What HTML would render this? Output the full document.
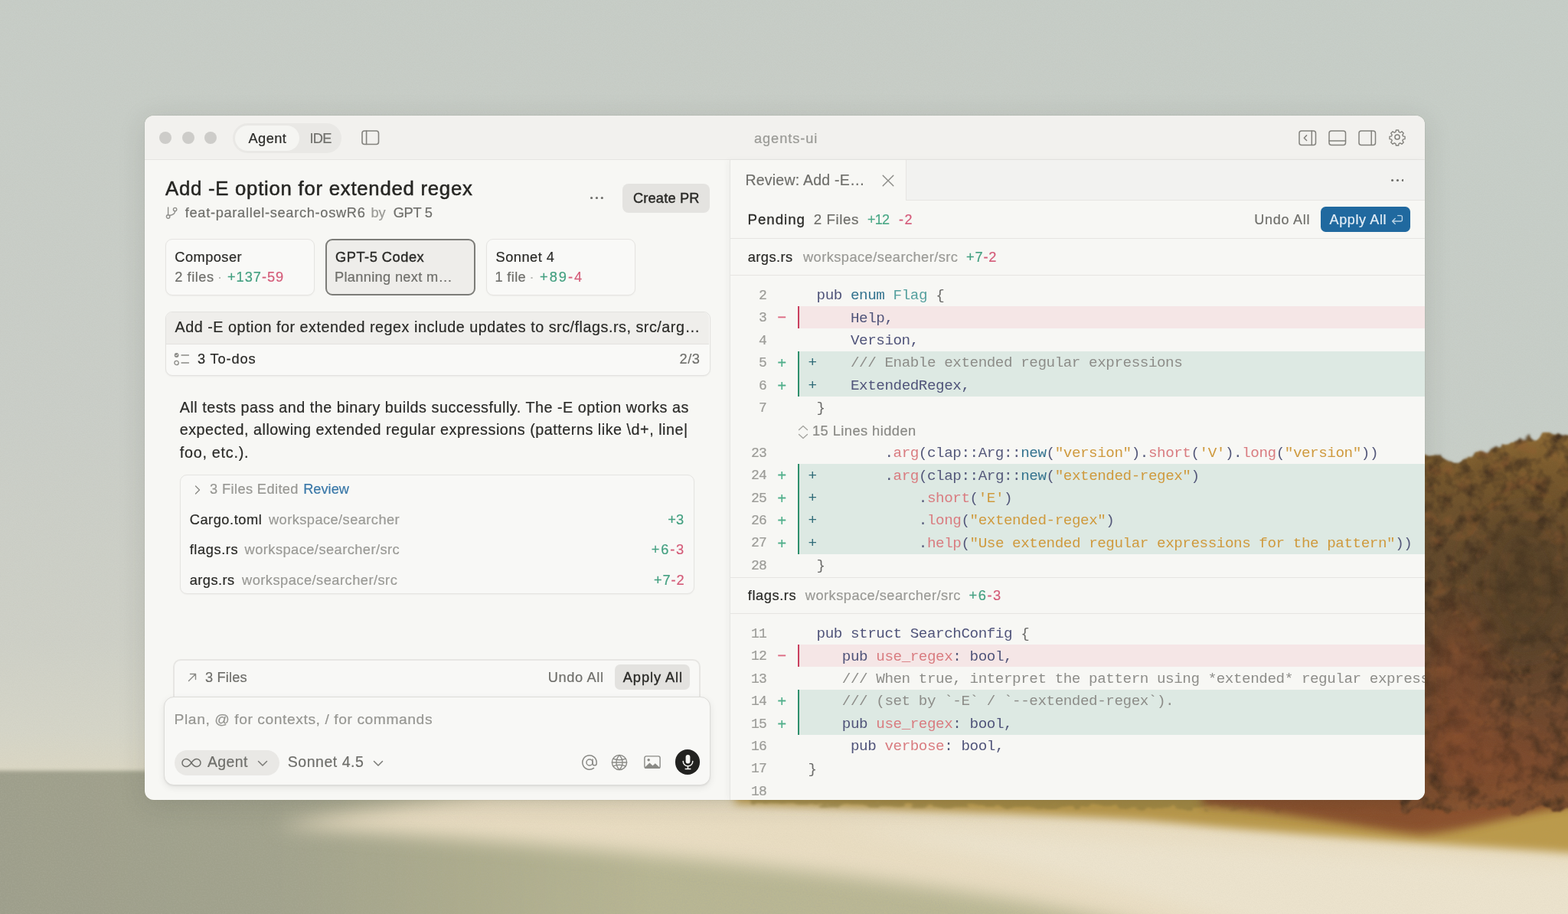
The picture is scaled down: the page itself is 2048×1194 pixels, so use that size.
<!DOCTYPE html>
<html lang="en">
<head>
<meta charset="utf-8">
<title>agents-ui</title>
<style>
*{box-sizing:border-box}
html,body{margin:0;padding:0;width:2048px;height:1194px;overflow:hidden;background:#cdd0c8}
body{position:relative;font-family:"Liberation Sans",sans-serif;-webkit-font-smoothing:antialiased}
.bg{position:absolute;left:0;top:0}
.shadow{position:absolute;left:189px;top:151px;width:1672px;height:893.5px;border-radius:12px;
  box-shadow:0 0 0 1px rgba(60,60,50,.06),0 6px 36px rgba(40,40,30,.13)}
.win{position:absolute;left:189px;top:151px;width:1672px;height:893.5px;border-radius:12px;overflow:hidden;
  background:#f7f7f4;will-change:transform}
.win .in{left:-189px;top:-151px;width:2048px;height:1194px}
.win div,.win .t,.win svg,.win pre{position:absolute;margin:0}
.win h1,.win p{font-weight:400}
.t{white-space:pre;line-height:1;-webkit-text-stroke:0.2px}
.code{white-space:pre;line-height:1;font-family:"Liberation Mono",monospace;font-size:19.25px;letter-spacing:-0.44px;color:#50547a}
.code i,.t i{font-style:normal}
.k{color:#50547a}.b{color:#34738f}.ty{color:#55a09e}.f{color:#d97c80}.s{color:#cf9a3e}.c{color:#8d8d89}.p{color:#54587a}.g{color:#6a6a68}.ip{color:#2f6b78}
</style>
</head>
<body>
<svg class="bg" width="2048" height="1194" viewBox="0 0 2048 1194" aria-hidden="true">
<defs>
  <linearGradient id="sky" x1="0" y1="0" x2="0" y2="1">
    <stop offset="0" stop-color="#c7cdc7"/>
    <stop offset="0.45" stop-color="#cacec8"/>
    <stop offset="0.7" stop-color="#ced0c7"/>
    <stop offset="0.8" stop-color="#d5d5c8"/>
    <stop offset="0.845" stop-color="#dbd7c4"/>
  </linearGradient>
  <linearGradient id="cool" x1="0" y1="0" x2="1" y2="0">
    <stop offset="0" stop-color="#c6cec8" stop-opacity="0"/>
    <stop offset="0.55" stop-color="#c6cec8" stop-opacity="0.1"/>
    <stop offset="1" stop-color="#c6cec8" stop-opacity="0.75"/>
  </linearGradient>
  <linearGradient id="water" x1="0" y1="0" x2="1" y2="0">
    <stop offset="0" stop-color="#9d9e8b"/>
    <stop offset="0.18" stop-color="#a1a28c"/>
    <stop offset="0.3" stop-color="#adac8c"/>
    <stop offset="0.42" stop-color="#b9b793"/>
    <stop offset="0.7" stop-color="#bdb994"/>
    <stop offset="1" stop-color="#c4bd98"/>
  </linearGradient>
  <linearGradient id="trees" x1="0" y1="0" x2="0" y2="1">
    <stop offset="0" stop-color="#8c6832"/>
    <stop offset="0.1" stop-color="#76572b"/>
    <stop offset="0.3" stop-color="#644a2b"/>
    <stop offset="0.55" stop-color="#5c432a"/>
    <stop offset="0.8" stop-color="#71472c"/>
    <stop offset="1" stop-color="#7e4f2e"/>
  </linearGradient>
  <filter id="b3" x="-5%" y="-5%" width="110%" height="110%"><feGaussianBlur stdDeviation="2.5"/></filter>
  <filter id="b6" x="-10%" y="-30%" width="120%" height="160%"><feGaussianBlur stdDeviation="6"/></filter>
  <filter id="b12" x="-10%" y="-40%" width="120%" height="180%"><feGaussianBlur stdDeviation="12"/></filter>
  <filter id="b24" x="-30%" y="-30%" width="160%" height="160%"><feGaussianBlur stdDeviation="22"/></filter>
  <filter id="grain" x="0" y="0" width="100%" height="100%">
    <feTurbulence type="fractalNoise" baseFrequency="0.8" numOctaves="2" seed="7"/>
    <feColorMatrix type="matrix" values="0 0 0 0 0.35  0 0 0 0 0.33  0 0 0 0 0.25  1.3 0 0 0 -0.45"/>
  </filter>
  <filter id="tuft" x="-2%" y="-60%" width="104%" height="220%">
    <feTurbulence type="fractalNoise" baseFrequency="0.05 0.12" numOctaves="2" seed="5" result="t"/>
    <feDisplacementMap in="SourceGraphic" in2="t" scale="16" xChannelSelector="R" yChannelSelector="G"/>
    <feGaussianBlur stdDeviation="1.5"/>
  </filter>
  <filter id="grain2" x="0" y="0" width="100%" height="100%">
    <feTurbulence type="fractalNoise" baseFrequency="0.55" numOctaves="2" seed="23"/>
    <feColorMatrix type="matrix" values="0 0 0 0 0.42  0 0 0 0 0.42  0 0 0 0 0.33  0 1.6 0 0 -0.6"/>
  </filter>
  <filter id="rough" x="-5%" y="-10%" width="110%" height="120%" color-interpolation-filters="sRGB">
    <feTurbulence type="fractalNoise" baseFrequency="0.035" numOctaves="3" seed="3" result="t"/>
    <feDisplacementMap in="SourceGraphic" in2="t" scale="26" xChannelSelector="R" yChannelSelector="G" result="shape0"/>
    <feGaussianBlur in="shape0" stdDeviation="1.6" result="shape"/>
    <feTurbulence type="fractalNoise" baseFrequency="0.045" numOctaves="3" seed="11" result="n"/>
    <feColorMatrix in="n" type="matrix" values="0 0 0 0 0.24  0 0 0 0 0.17  0 0 0 0 0.11  0 2.1 0 0 -0.88" result="dark"/>
    <feColorMatrix in="n" type="matrix" values="0 0 0 0 0.58  0 0 0 0 0.36  0 0 0 0 0.19  1.5 0 0 0 -0.8" result="warm"/>
    <feMerge result="m"><feMergeNode in="shape"/><feMergeNode in="dark"/><feMergeNode in="warm"/></feMerge>
    <feComposite in="m" in2="shape" operator="in"/>
  </filter>
</defs>
<rect width="2048" height="1194" fill="url(#sky)"/>
<rect width="2048" height="1000" fill="url(#cool)"/>
<!-- water / foreground -->
<rect x="-20" y="1007" width="2100" height="220" fill="url(#water)" filter="url(#b3)"/>
<rect x="0" y="1008" width="2048" height="186" filter="url(#grain2)" opacity="0.5"/>
<!-- sand spit -->
<path d="M360 1078 C 470 1058, 560 1046, 640 1036 L 2080 1036 L 2080 1230 L 1560 1230 C 1380 1172, 1060 1134, 700 1103 C 560 1092, 450 1084, 360 1078 Z" fill="#e9ddc2" filter="url(#b12)"/>
<path d="M1100 1080 C 1400 1090, 1800 1120, 2080 1135 L 2080 1230 L 1700 1230 C 1500 1170, 1300 1120, 1100 1080 Z" fill="#ece3cd" filter="url(#b12)"/>
<!-- dune grass -->
<path d="M960 1030 L 2080 1030 L 2080 1116 C 1900 1104, 1700 1092, 1500 1072 C 1300 1060, 1100 1056, 960 1050 Z" fill="#bb9a4c" filter="url(#b6)"/>
<path d="M980 1040 L 1861 1040 L 1861 1056 C 1600 1058, 1300 1054, 980 1050 Z" fill="#8d7a3e" opacity="0.55" filter="url(#tuft)"/>
<!-- red bushes at the foot of the trees -->
<path d="M1570 1030 L 2080 1030 L 2080 1050 C 1990 1058, 1920 1086, 1855 1090 C 1790 1084, 1690 1062, 1570 1052 Z" fill="#85482a" opacity="0.9" filter="url(#b6)"/>
<!-- tree mass on the right -->
<path d="M1830 590 L 1861 595 C 1880 596, 1895 601, 1908 600 C 1920 598, 1926 594, 1934 591 C 1950 586, 1962 580, 1978 577 C 1996 571, 2010 568, 2025 567 C 2035 567, 2042 569, 2060 571 L 2060 1058 L 1830 1058 Z" fill="url(#trees)" filter="url(#rough)"/>
<ellipse cx="1990" cy="760" rx="60" ry="90" fill="#4e3a24" opacity="0.55" filter="url(#b24)"/>
<ellipse cx="1905" cy="900" rx="45" ry="110" fill="#87482b" opacity="0.45" filter="url(#b24)"/>
<ellipse cx="1950" cy="1000" rx="80" ry="40" fill="#87482b" opacity="0.45" filter="url(#b24)"/>
<rect width="2048" height="1194" filter="url(#grain)" opacity="0.10"/>
</svg>
<div class="shadow"></div>
<main class="win"><div class="in">
<!-- title bar -->
<div style="left:189px;top:151px;width:1672px;height:58px;background:#f2f1ee;border-bottom:1px solid #e6e5e2"></div>
<div style="left:208.25px;top:172px;width:16px;height:16px;border-radius:50%;background:#cdccc9"></div>
<div style="left:237.5px;top:172px;width:16px;height:16px;border-radius:50%;background:#cdccc9"></div>
<div style="left:267px;top:172px;width:16px;height:16px;border-radius:50%;background:#cdccc9"></div>
<div style="left:304px;top:161px;width:142px;height:38.5px;border-radius:20px;background:#e9e8e5"></div>
<div style="left:307px;top:164px;width:84px;height:32.5px;border-radius:17px;background:#f5f5f2"></div>
<span class="t" style="left:324.50px;top:172.00px;font-size:18.25px;color:#2a2a27;letter-spacing:0.41px;">Agent</span>
<span class="t" style="left:404.50px;top:172.00px;font-size:18.25px;color:#6f6f6b;letter-spacing:-0.75px;">IDE</span>
<svg style="left:471.5px;top:170px" width="24" height="20" viewBox="0 0 24 20" fill="none" stroke="#83827d" stroke-width="1.6" stroke-linecap="round" stroke-linejoin="round" ><rect x="1" y="1" width="21.5" height="17.5" rx="3"/><path d="M6.6 1v17.5"/></svg>
<span class="t" style="left:985.00px;top:172.00px;font-size:18.25px;color:#9a9a96;letter-spacing:0.9px;">agents-ui</span>
<svg style="left:1695.5px;top:169.5px" width="24" height="21" viewBox="0 0 24 21" fill="none" stroke="#83827d" stroke-width="1.5" stroke-linecap="round" stroke-linejoin="round" ><rect x="1" y="1" width="21.5" height="18.5" rx="3"/><path d="M17.3 1v18.5"/><path d="M10.6 6.9 7.3 10.2l3.3 3.3"/></svg>
<svg style="left:1734.5px;top:169.5px" width="24" height="21" viewBox="0 0 24 21" fill="none" stroke="#83827d" stroke-width="1.5" stroke-linecap="round" stroke-linejoin="round" ><rect x="1" y="1" width="21.5" height="18.5" rx="3"/><path d="M1 14h21.5"/></svg>
<svg style="left:1774px;top:169.5px" width="24" height="21" viewBox="0 0 24 21" fill="none" stroke="#83827d" stroke-width="1.5" stroke-linecap="round" stroke-linejoin="round" ><rect x="1" y="1" width="21.5" height="18.5" rx="3"/><path d="M17.2 1v18.5"/></svg>
<svg style="left:1813.4px;top:167px" width="24" height="24" viewBox="0 0 24 24" fill="none" stroke="#83827d" stroke-width="1.5" stroke-linecap="round" stroke-linejoin="round" ><circle cx="12" cy="12" r="3.1"/><path d="M10.3 2.3h3.4l.6 2.7 1.7.8 2.4-1.5 2.4 2.4-1.5 2.4.8 1.7 2.7.6v3.4l-2.7.6-.8 1.7 1.5 2.4-2.4 2.4-2.4-1.5-1.7.8-.6 2.7h-3.4l-.6-2.7-1.7-.8-2.4 1.5-2.4-2.4 1.5-2.4-.8-1.7-2.7-.6v-3.4l2.7-.6.8-1.7-1.5-2.4 2.4-2.4 2.4 1.5 1.7-.8z" transform="translate(12 12) scale(0.93) translate(-12 -12)"/></svg>
<!-- left panel: agent conversation -->
<h1 class="t" style="left:216.00px;top:234.00px;font-size:25.75px;color:#262623;letter-spacing:0.74px;-webkit-text-stroke:0.5px #262623;">Add -E option for extended regex</h1>
<svg style="left:215.5px;top:269.5px" width="17" height="17" viewBox="0 0 17 17" fill="none" stroke="#8f8f8b" stroke-width="1.4" stroke-linecap="round" stroke-linejoin="round" ><circle cx="3.6" cy="13" r="2.2"/><circle cx="12.6" cy="3.6" r="2.2"/><path d="M3.6 1v9.6"/><path d="M12.6 5.9c0 3.6-3.2 4.8-6.9 5.6"/></svg>
<span class="t" style="left:241.75px;top:269.00px;font-size:18.25px;color:#6f6f6b;letter-spacing:0.68px;">feat-parallel-search-oswR6</span>
<span class="t" style="left:484.50px;top:269.00px;font-size:18.25px;color:#9a9a96;letter-spacing:-0.15px;">by</span>
<span class="t" style="left:513.75px;top:269.00px;font-size:18.25px;color:#6f6f6b;letter-spacing:-0.33px;">GPT 5</span>
<svg style="left:771.25px;top:257.2px" width="16.9" height="3.1" viewBox="0 0 16.9 3.1" fill="#6f6f6b"><circle cx="1.55" cy="1.55" r="1.55"/><circle cx="8.45" cy="1.55" r="1.55"/><circle cx="15.35" cy="1.55" r="1.55"/></svg>
<div style="left:812.75px;top:239.5px;width:114.25px;height:38.5px;border-radius:8px;background:#e4e3e0"></div>
<span class="t" style="left:827.00px;top:250.00px;font-size:18.25px;color:#2a2a27;letter-spacing:0.15px;-webkit-text-stroke:0.4px #2a2a27;">Create PR</span>
<div style="left:215.5px;top:312px;width:195px;height:73.5px;border-radius:9px;border:1.5px solid #e5e4e1;background:#f9f9f7;box-shadow:0 1px 2px rgba(0,0,0,.04)"></div>
<div style="left:424.5px;top:312px;width:196px;height:73.5px;border-radius:9px;border:2px solid #7c7c78;background:#eeedea"></div>
<div style="left:634.5px;top:312px;width:195.5px;height:73.5px;border-radius:9px;border:1.5px solid #e5e4e1;background:#f9f9f7;box-shadow:0 1px 2px rgba(0,0,0,.04)"></div>
<span class="t" style="left:228.25px;top:327.00px;font-size:18.25px;color:#2a2a27;letter-spacing:0.45px;">Composer</span>
<span class="t" style="left:228.25px;top:353.00px;font-size:18.25px;color:#6f6f6b;letter-spacing:0.53px;">2 files</span>
<span class="t" style="left:284.00px;top:353.00px;font-size:18.25px;color:#b5b5b1;">·</span>
<span class="t" style="left:297.00px;top:353.00px;font-size:18.25px;color:#44a081;letter-spacing:0.94px;"><i style="color:#44a081">+137</i><i style="color:#d45c79">-59</i></span>
<span class="t" style="left:438.00px;top:327.00px;font-size:18.25px;color:#2a2a27;letter-spacing:0.51px;-webkit-text-stroke:0.4px #2a2a27;">GPT-5 Codex</span>
<span class="t" style="left:437.00px;top:353.00px;font-size:18.25px;color:#6f6f6b;letter-spacing:0.31px;">Planning next m…</span>
<span class="t" style="left:647.50px;top:327.00px;font-size:18.25px;color:#2a2a27;letter-spacing:0.48px;">Sonnet 4</span>
<span class="t" style="left:646.50px;top:353.00px;font-size:18.25px;color:#6f6f6b;letter-spacing:0.32px;">1 file</span>
<span class="t" style="left:691.50px;top:353.00px;font-size:18.25px;color:#b5b5b1;">·</span>
<span class="t" style="left:705.00px;top:353.00px;font-size:18.25px;color:#44a081;letter-spacing:1.99px;"><i style="color:#44a081">+89</i><i style="color:#d45c79">-4</i></span>
<div style="left:215.5px;top:406.5px;width:712px;height:84.5px;border-radius:9px;border:1.5px solid #e3e2df;background:#f9f9f7;box-shadow:0 1px 2px rgba(0,0,0,.05)"></div>
<div style="left:217px;top:408px;width:709px;height:41.5px;border-radius:7.5px 7.5px 0 0;background:#efeeeb;border-bottom:1px solid #e3e2df"></div>
<span class="t" style="left:228.50px;top:418.00px;font-size:19.75px;color:#2a2a27;letter-spacing:0.52px;">Add -E option for extended regex include updates to src/flags.rs, src/arg…</span>
<svg style="left:227px;top:459.5px" width="21" height="18" viewBox="0 0 21 18" fill="none" stroke="#8a8a86" stroke-width="1.3" stroke-linecap="round" stroke-linejoin="round" ><circle cx="3.6" cy="4" r="2.9" fill="#8a8a86" stroke="none"/><path d="M2.3 4l1 1 1.7-2" stroke="#f7f7f4" stroke-width="1"/><circle cx="3.6" cy="14" r="2.7"/><path d="M10 4h9.5M10 14h9.5"/></svg>
<span class="t" style="left:258.00px;top:460.00px;font-size:18.25px;color:#2a2a27;letter-spacing:0.84px;">3 To-dos</span>
<span class="t" style="left:887.50px;top:460.00px;font-size:18.25px;color:#6f6f6b;letter-spacing:0.51px;">2/3</span>
<p class="t" style="left:234.70px;top:523.00px;font-size:19.75px;color:#2a2a27;letter-spacing:0.52px;">All tests pass and the binary builds successfully. The -E option works as</p>
<p class="t" style="left:234.70px;top:552.00px;font-size:19.75px;color:#2a2a27;letter-spacing:0.52px;">expected, allowing extended regular expressions (patterns like \d+, line|</p>
<p class="t" style="left:234.70px;top:582.00px;font-size:19.75px;color:#2a2a27;letter-spacing:0.75px;">foo, etc.).</p>
<div style="left:235px;top:620px;width:672px;height:155.5px;border-radius:9px;border:1.5px solid #e5e4e1;background:#f8f8f6;box-shadow:0 1px 2px rgba(0,0,0,.04)"></div>
<svg style="left:254px;top:632.5px" width="9" height="14" viewBox="0 0 9 14" fill="none" stroke="#8a8a86" stroke-width="1.4" stroke-linecap="round" stroke-linejoin="round" ><path d="M1.5 2 6.5 7l-5 5"/></svg>
<span class="t" style="left:274.00px;top:630.00px;font-size:18.25px;color:#979793;letter-spacing:0.38px;">3 Files Edited</span>
<span class="t" style="left:396.20px;top:630.00px;font-size:18.25px;color:#3a78a8;letter-spacing:-0.01px;">Review</span>
<span class="t" style="left:247.70px;top:670.00px;font-size:18.25px;color:#2a2a27;letter-spacing:0.53px;">Cargo.toml</span>
<span class="t" style="left:351.00px;top:670.00px;font-size:18.25px;color:#9a9a96;letter-spacing:0.43px;">workspace/searcher</span>
<span class="t" style="left:872.34px;top:670.00px;font-size:18.25px;color:#44a081;">+3</span>
<span class="t" style="left:247.70px;top:709.00px;font-size:18.25px;color:#2a2a27;letter-spacing:0.59px;">flags.rs</span>
<span class="t" style="left:319.60px;top:709.00px;font-size:18.25px;color:#9a9a96;letter-spacing:0.45px;">workspace/searcher/src</span>
<span class="t" style="left:850.70px;top:709.00px;font-size:18.25px;color:#44a081;letter-spacing:1.81px;"><i style="color:#44a081">+6</i><i style="color:#d45c79">-3</i></span>
<span class="t" style="left:247.70px;top:749.00px;font-size:18.25px;color:#2a2a27;letter-spacing:0.44px;">args.rs</span>
<span class="t" style="left:316.00px;top:749.00px;font-size:18.25px;color:#9a9a96;letter-spacing:0.48px;">workspace/searcher/src</span>
<span class="t" style="left:854.00px;top:749.00px;font-size:18.25px;color:#44a081;letter-spacing:0.87px;"><i style="color:#44a081">+7</i><i style="color:#d45c79">-2</i></span>
<div style="left:226px;top:860.6px;width:689px;height:60px;border-radius:10px 10px 0 0;border:2px solid #e7e6e3;background:#f8f8f6"></div>
<svg style="left:244.5px;top:879px" width="12" height="12" viewBox="0 0 12 12" fill="none" stroke="#8a8a86" stroke-width="1.4" stroke-linecap="round" stroke-linejoin="round" ><path d="M1.5 10.5 10.5 1.5M3.5 1.5h7v7"/></svg>
<span class="t" style="left:268.00px;top:876.00px;font-size:18.25px;color:#6f6f6b;letter-spacing:0.15px;">3 Files</span>
<span class="t" style="left:715.75px;top:876.00px;font-size:18.25px;color:#6f6f6b;letter-spacing:0.62px;">Undo All</span>
<div style="left:803px;top:868px;width:97.5px;height:32.5px;border-radius:7px;background:#e3e2df"></div>
<span class="t" style="left:813.75px;top:876.00px;font-size:18.25px;color:#2a2a27;letter-spacing:0.91px;-webkit-text-stroke:0.4px #2a2a27;">Apply All</span>
<div style="left:213.75px;top:909.6px;width:714.25px;height:116.2px;border-radius:13px;border:1.5px solid #dddcd9;background:#f8f8f6;box-shadow:0 3px 10px rgba(0,0,0,.08),0 1px 2px rgba(0,0,0,.06)"></div>
<span class="t" style="left:227.60px;top:930.00px;font-size:19.25px;color:#969692;letter-spacing:0.57px;">Plan, @ for contexts, / for commands</span>
<div style="left:227.5px;top:979.5px;width:137.5px;height:33px;border-radius:17px;background:#e9e8e5"></div>
<svg style="left:237px;top:989.5px" width="26" height="13" viewBox="0 0 26 13" fill="none" stroke="#6f6f6b" stroke-width="1.5" stroke-linecap="round" stroke-linejoin="round" ><path d="M13 6.5c-2-3-4-5-7-5a5 5 0 0 0 0 10c3 0 5-2 7-5s4-5 7-5a5 5 0 0 1 0 10c-3 0-5-2-7-5z"/></svg>
<span class="t" style="left:271.00px;top:986.00px;font-size:19.5px;color:#6f6f6b;letter-spacing:0.36px;">Agent</span>
<svg style="left:335.5px;top:992.5px" width="14" height="9" viewBox="0 0 14 9" fill="none" stroke="#7a7a76" stroke-width="1.5" stroke-linecap="round" stroke-linejoin="round" ><path d="M1.5 1.5 7 7l5.500-5.5"/></svg>
<span class="t" style="left:375.75px;top:986.00px;font-size:19.5px;color:#6f6f6b;letter-spacing:0.53px;">Sonnet 4.5</span>
<svg style="left:486.5px;top:992.5px" width="14" height="9" viewBox="0 0 14 9" fill="none" stroke="#7a7a76" stroke-width="1.5" stroke-linecap="round" stroke-linejoin="round" ><path d="M1.5 1.5 7 7l5.500-5.5"/></svg>
<svg style="left:758.6px;top:984.8px" width="22" height="22" viewBox="0 0 22 22" fill="none" stroke="#8a8a86" stroke-width="1.5" stroke-linecap="round" stroke-linejoin="round" ><circle cx="11" cy="11" r="4"/><path d="M15 7v5.2a2.6 2.6 0 0 0 5.200 0V11a9.2 9.2 0 1 0-3.700 7.400"/></svg>
<svg style="left:797.6px;top:984.5px" width="22" height="22" viewBox="0 0 22 22" fill="none" stroke="#8a8a86" stroke-width="1.4" stroke-linecap="round" stroke-linejoin="round" ><circle cx="11" cy="11" r="9.6"/><path d="M1.4 11h19.200"/><path d="M11 1.4c2.600 2.700 4 6 4 9.600s-1.400 6.900-4 9.600c-2.600-2.700-4-6-4-9.600s1.400-6.900 4-9.600z"/><path d="M2.800 6.200c2.400 1 5.200 1.500 8.200 1.500s5.800-.5 8.200-1.500M2.800 15.800c2.400-1 5.200-1.500 8.200-1.500s5.800.5 8.200 1.500" /></svg>
<svg style="left:840.5px;top:986.5px" width="22" height="17.5" viewBox="0 0 22 17.500" fill="none" stroke="#8a8a86" stroke-width="1.4" stroke-linecap="round" stroke-linejoin="round" ><rect x="0.9" y="0.9" width="20.200" height="15.700" rx="2.200"/><circle cx="6.200" cy="5.800" r="1.700" fill="#8a8a86" stroke="none"/><path d="M1.200 15.600 7.500 9.600l4 3.700 3.300-3 6 5.500V16.400H1.200z" fill="#8a8a86" stroke="none"/></svg>
<div style="left:881.5px;top:979.2px;width:32.8px;height:32.8px;border-radius:50%;background:#222220"></div>
<svg style="left:889.5px;top:985px" width="17" height="21" viewBox="0 0 17 21" fill="none" stroke="#f7f7f4" stroke-width="1.5" stroke-linecap="round" stroke-linejoin="round" ><rect x="5.600" y="1" width="5.800" height="11.500" rx="2.900" fill="#f7f7f4" stroke="none"/><path d="M2.200 9.500a6.300 6.300 0 0 0 12.600 0M8.500 15.900V19.600M5.200 19.600h6.600"/></svg>
<!-- right panel: review -->
<div style="left:953px;top:209px;width:908px;height:836px;border-left:1px solid #e6e5e2;background:#f7f7f4;box-shadow:-3px 0 8px rgba(0,0,0,.035)"></div>
<div style="left:954px;top:209px;width:907px;height:53px;background:#f2f2f0;border-bottom:1px solid #e6e5e2"></div>
<div style="left:954px;top:209px;width:229.5px;height:53px;background:#f7f7f4;border-right:1px solid #e6e5e2"></div>
<span class="t" style="left:973.40px;top:226.00px;font-size:19.5px;color:#6f6f6b;letter-spacing:0.23px;">Review: Add -E…</span>
<svg style="left:1152.1px;top:227.6px" width="16" height="16" viewBox="0 0 16 16" fill="none" stroke="#8a8a86" stroke-width="1.4" stroke-linecap="round" stroke-linejoin="round" ><path d="M1.2 1.2l13.6 13.6M14.8 1.2L1.2 14.8"/></svg>
<svg style="left:1816.6px;top:234.05px" width="16.9" height="3.1" viewBox="0 0 16.9 3.1" fill="#6f6f6b"><circle cx="1.55" cy="1.55" r="1.55"/><circle cx="8.45" cy="1.55" r="1.55"/><circle cx="15.35" cy="1.55" r="1.55"/></svg>
<div style="left:954px;top:262px;width:907px;height:50px;border-bottom:1px solid #e6e5e2"></div>
<span class="t" style="left:976.50px;top:278.00px;font-size:18.75px;color:#2a2a27;letter-spacing:0.95px;-webkit-text-stroke:0.28px #2a2a27;">Pending</span>
<span class="t" style="left:1062.75px;top:278.00px;font-size:18.75px;color:#6f6f6b;letter-spacing:0.57px;">2 Files</span>
<span class="t" style="left:1133.00px;top:278.00px;font-size:18px;color:#4aa886;letter-spacing:-0.81px;">+12</span>
<span class="t" style="left:1174.00px;top:278.00px;font-size:18px;color:#d45a7a;letter-spacing:1.51px;">-2</span>
<span class="t" style="left:1638.30px;top:278.00px;font-size:18px;color:#6f6f6b;letter-spacing:0.75px;">Undo All</span>
<div style="left:1725px;top:270px;width:116.5px;height:32.5px;border-radius:6.5px;background:#20699f"></div>
<span class="t" style="left:1736.60px;top:278.00px;font-size:18px;color:#e3eef7;letter-spacing:0.62px;">Apply All</span>
<svg style="left:1817.2px;top:280px" width="16" height="15" viewBox="0 0 16 15" fill="none" stroke="#b9d3e6" stroke-width="1.4" stroke-linecap="round" stroke-linejoin="round" ><path d="M8.6 1.600h4a1.800 1.800 0 0 1 1.800 1.800v3.800a1.800 1.800 0 0 1-1.800 1.800H1.600M5.200 5.400 1.600 9l3.600 3.600"/></svg>
<div style="left:954px;top:312px;width:907px;height:48px;border-bottom:1px solid #e6e5e2"></div>
<span class="t" style="left:976.75px;top:327.00px;font-size:18.25px;color:#2a2a27;letter-spacing:0.43px;">args.rs</span>
<span class="t" style="left:1049.00px;top:327.00px;font-size:18.25px;color:#9a9a96;letter-spacing:0.44px;">workspace/searcher/src</span>
<span class="t" style="left:1262.00px;top:327.00px;font-size:18.25px;color:#44a081;letter-spacing:0.79px;"><i style="color:#44a081">+7</i><i style="color:#d45c79">-2</i></span>
<div style="left:954px;top:753.75px;width:907px;height:48px;border-top:1px solid #e6e5e2;border-bottom:1px solid #e6e5e2"></div>
<span class="t" style="left:976.75px;top:769.00px;font-size:18.25px;color:#2a2a27;letter-spacing:0.58px;">flags.rs</span>
<span class="t" style="left:1051.75px;top:769.00px;font-size:18.25px;color:#9a9a96;letter-spacing:0.47px;">workspace/searcher/src</span>
<span class="t" style="left:1265.50px;top:769.00px;font-size:18.25px;color:#44a081;letter-spacing:1.54px;"><i style="color:#44a081">+6</i><i style="color:#d45c79">-3</i></span>
<span class="t" style="left:991.10px;top:377.00px;font-size:18px;color:#9c9c98;letter-spacing:-0.6px;font-family:'Liberation Mono', monospace;">2</span>
<pre class="code" style="left:1055.4px;top:377px"> <i class="k">pub</i> <i class="b">enum</i> <i class="ty">Flag</i> <i class="g">{</i></pre>
<div style="left:1042px;top:400.02px;width:819px;height:29.42px;background:#f5e6e6;border-left:2px solid #c9405f"></div>
<span class="t" style="left:1015.20px;top:406.00px;font-size:20px;color:#dc6a82;font-family:'Liberation Mono', monospace;">−</span>
<span class="t" style="left:991.10px;top:406.00px;font-size:18px;color:#9c9c98;letter-spacing:-0.6px;font-family:'Liberation Mono', monospace;">3</span>
<pre class="code" style="left:1055.4px;top:407px"><i class="k">     Help,</i></pre>
<span class="t" style="left:991.10px;top:436.00px;font-size:18px;color:#9c9c98;letter-spacing:-0.6px;font-family:'Liberation Mono', monospace;">4</span>
<pre class="code" style="left:1055.4px;top:436px"><i class="k">     Version,</i></pre>
<div style="left:1042px;top:458.86px;width:819px;height:29.42px;background:#dde9e3;border-left:2px solid #2e8f6c"></div>
<span class="t" style="left:1015.20px;top:466.00px;font-size:20px;color:#4fae8a;font-family:'Liberation Mono', monospace;">+</span>
<span class="t" style="left:991.10px;top:465.00px;font-size:18px;color:#9c9c98;letter-spacing:-0.6px;font-family:'Liberation Mono', monospace;">5</span>
<pre class="code" style="left:1055.4px;top:465px"><i class="ip">+</i><i class="c">    /// Enable extended regular expressions</i></pre>
<div style="left:1042px;top:488.28px;width:819px;height:29.42px;background:#dde9e3;border-left:2px solid #2e8f6c"></div>
<span class="t" style="left:1015.20px;top:496.00px;font-size:20px;color:#4fae8a;font-family:'Liberation Mono', monospace;">+</span>
<span class="t" style="left:991.10px;top:495.00px;font-size:18px;color:#9c9c98;letter-spacing:-0.6px;font-family:'Liberation Mono', monospace;">6</span>
<pre class="code" style="left:1055.4px;top:495px"><i class="ip">+</i><i class="k">    ExtendedRegex,</i></pre>
<span class="t" style="left:991.10px;top:524.00px;font-size:18px;color:#9c9c98;letter-spacing:-0.6px;font-family:'Liberation Mono', monospace;">7</span>
<pre class="code" style="left:1055.4px;top:524px"><i class="g"> }</i></pre>
<svg style="left:1041.5px;top:554.5px" width="14" height="19" viewBox="0 0 14 19" fill="none" stroke="#a3a39f" stroke-width="1.3" stroke-linecap="round" stroke-linejoin="round" ><path d="M1.5 6.5 7 1.5l5.5 5M1.5 12.5 7 17.5l5.5-5"/></svg>
<span class="t" style="left:1061.00px;top:554.00px;font-size:18.25px;color:#8a8a86;letter-spacing:0.45px;">15 Lines hidden</span>
<span class="t" style="left:980.90px;top:583.00px;font-size:18px;color:#9c9c98;letter-spacing:-0.6px;font-family:'Liberation Mono', monospace;">23</span>
<pre class="code" style="left:1055.4px;top:583px"><i class="p">         .</i><i class="f">arg</i><i class="p">(clap::Arg::</i><i class="b">new</i><i class="p">(</i><i class="s">"version"</i><i class="p">).</i><i class="f">short</i><i class="p">(</i><i class="s">'V'</i><i class="p">).</i><i class="f">long</i><i class="p">(</i><i class="s">"version"</i><i class="p">))</i></pre>
<div style="left:1042px;top:605.96px;width:819px;height:29.42px;background:#dde9e3;border-left:2px solid #2e8f6c"></div>
<span class="t" style="left:1015.20px;top:613.00px;font-size:20px;color:#4fae8a;font-family:'Liberation Mono', monospace;">+</span>
<span class="t" style="left:980.90px;top:612.00px;font-size:18px;color:#9c9c98;letter-spacing:-0.6px;font-family:'Liberation Mono', monospace;">24</span>
<pre class="code" style="left:1055.4px;top:613px"><i class="ip">+</i><i class="p">        .</i><i class="f">arg</i><i class="p">(clap::Arg::</i><i class="b">new</i><i class="p">(</i><i class="s">"extended-regex"</i><i class="p">)</i></pre>
<div style="left:1042px;top:635.38px;width:819px;height:29.42px;background:#dde9e3;border-left:2px solid #2e8f6c"></div>
<span class="t" style="left:1015.20px;top:643.00px;font-size:20px;color:#4fae8a;font-family:'Liberation Mono', monospace;">+</span>
<span class="t" style="left:980.90px;top:642.00px;font-size:18px;color:#9c9c98;letter-spacing:-0.6px;font-family:'Liberation Mono', monospace;">25</span>
<pre class="code" style="left:1055.4px;top:642px"><i class="ip">+</i><i class="p">            .</i><i class="f">short</i><i class="p">(</i><i class="s">'E'</i><i class="p">)</i></pre>
<div style="left:1042px;top:664.8px;width:819px;height:29.42px;background:#dde9e3;border-left:2px solid #2e8f6c"></div>
<span class="t" style="left:1015.20px;top:672.00px;font-size:20px;color:#4fae8a;font-family:'Liberation Mono', monospace;">+</span>
<span class="t" style="left:980.90px;top:671.00px;font-size:18px;color:#9c9c98;letter-spacing:-0.6px;font-family:'Liberation Mono', monospace;">26</span>
<pre class="code" style="left:1055.4px;top:671px"><i class="ip">+</i><i class="p">            .</i><i class="f">long</i><i class="p">(</i><i class="s">"extended-regex"</i><i class="p">)</i></pre>
<div style="left:1042px;top:694.22px;width:819px;height:29.42px;background:#dde9e3;border-left:2px solid #2e8f6c"></div>
<span class="t" style="left:1015.20px;top:702.00px;font-size:20px;color:#4fae8a;font-family:'Liberation Mono', monospace;">+</span>
<span class="t" style="left:980.90px;top:700.00px;font-size:18px;color:#9c9c98;letter-spacing:-0.6px;font-family:'Liberation Mono', monospace;">27</span>
<pre class="code" style="left:1055.4px;top:701px"><i class="ip">+</i><i class="p">            .</i><i class="f">help</i><i class="p">(</i><i class="s">"Use extended regular expressions for the pattern"</i><i class="p">))</i></pre>
<span class="t" style="left:980.90px;top:730.00px;font-size:18px;color:#9c9c98;letter-spacing:-0.6px;font-family:'Liberation Mono', monospace;">28</span>
<pre class="code" style="left:1055.4px;top:730px"><i class="g"> }</i></pre>
<span class="t" style="left:980.90px;top:819.00px;font-size:18px;color:#9c9c98;letter-spacing:-0.6px;font-family:'Liberation Mono', monospace;">11</span>
<pre class="code" style="left:1055.4px;top:819px"> <i class="k">pub struct SearchConfig</i> <i class="g">{</i></pre>
<div style="left:1042px;top:842.02px;width:819px;height:29.42px;background:#f5e6e6;border-left:2px solid #c9405f"></div>
<span class="t" style="left:1015.20px;top:848.00px;font-size:20px;color:#dc6a82;font-family:'Liberation Mono', monospace;">−</span>
<span class="t" style="left:980.90px;top:848.00px;font-size:18px;color:#9c9c98;letter-spacing:-0.6px;font-family:'Liberation Mono', monospace;">12</span>
<pre class="code" style="left:1055.4px;top:849px"><i class="k">    pub </i><i class="f">use_regex</i><i class="p">: </i><i class="k">bool</i><i class="p">,</i></pre>
<span class="t" style="left:980.90px;top:878.00px;font-size:18px;color:#9c9c98;letter-spacing:-0.6px;font-family:'Liberation Mono', monospace;">13</span>
<pre class="code" style="left:1055.4px;top:878px"><i class="c">    /// When true, interpret the pattern using *extended* regular expressions</i></pre>
<div style="left:1042px;top:900.86px;width:819px;height:29.42px;background:#dde9e3;border-left:2px solid #2e8f6c"></div>
<span class="t" style="left:1015.20px;top:908.00px;font-size:20px;color:#4fae8a;font-family:'Liberation Mono', monospace;">+</span>
<span class="t" style="left:980.90px;top:907.00px;font-size:18px;color:#9c9c98;letter-spacing:-0.6px;font-family:'Liberation Mono', monospace;">14</span>
<pre class="code" style="left:1055.4px;top:907px"><i class="c">    /// (set by `-E` / `--extended-regex`).</i></pre>
<div style="left:1042px;top:930.28px;width:819px;height:29.42px;background:#dde9e3;border-left:2px solid #2e8f6c"></div>
<span class="t" style="left:1015.20px;top:938.00px;font-size:20px;color:#4fae8a;font-family:'Liberation Mono', monospace;">+</span>
<span class="t" style="left:980.90px;top:937.00px;font-size:18px;color:#9c9c98;letter-spacing:-0.6px;font-family:'Liberation Mono', monospace;">15</span>
<pre class="code" style="left:1055.4px;top:937px"><i class="k">    pub </i><i class="f">use_regex</i><i class="p">: </i><i class="k">bool</i><i class="p">,</i></pre>
<span class="t" style="left:980.90px;top:966.00px;font-size:18px;color:#9c9c98;letter-spacing:-0.6px;font-family:'Liberation Mono', monospace;">16</span>
<pre class="code" style="left:1055.4px;top:966px"><i class="k">     pub </i><i class="f">verbose</i><i class="p">: </i><i class="k">bool</i><i class="p">,</i></pre>
<span class="t" style="left:980.90px;top:995.00px;font-size:18px;color:#9c9c98;letter-spacing:-0.6px;font-family:'Liberation Mono', monospace;">17</span>
<pre class="code" style="left:1055.4px;top:996px"><i class="g">}</i></pre>
<span class="t" style="left:980.90px;top:1025.00px;font-size:18px;color:#9c9c98;letter-spacing:-0.6px;font-family:'Liberation Mono', monospace;">18</span>
</div></main>
</body>
</html>
